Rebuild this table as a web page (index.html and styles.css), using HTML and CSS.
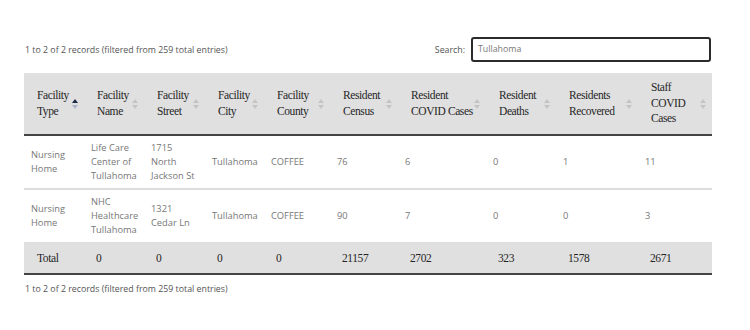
FILE: index.html
```html
<!DOCTYPE html>
<html>
<head>
<meta charset="utf-8">
<link rel="stylesheet" href="styles.css">
</head>
<body>
<div class="wrap">
  <div class="topbar">
    <div class="info">1 to 2 of 2 records (filtered from 259 total entries)</div>
    <label class="search">Search: <span class="input">Tullahoma</span></label>
  </div>
  <table class="grid">
    <colgroup>
      <col class="c1"><col class="c2"><col class="c3"><col class="c4"><col class="c5">
      <col class="c6"><col class="c7"><col class="c8"><col class="c9"><col class="c10">
    </colgroup>
    <thead>
      <tr>
        <th><span class="lbl">Facility<br>Type</span><span class="sort asc"></span></th>
        <th><span class="lbl">Facility<br>Name</span><span class="sort"></span></th>
        <th><span class="lbl">Facility<br>Street</span><span class="sort"></span></th>
        <th><span class="lbl">Facility<br>City</span><span class="sort"></span></th>
        <th><span class="lbl">Facility<br>County</span><span class="sort"></span></th>
        <th><span class="lbl">Resident<br>Census</span><span class="sort"></span></th>
        <th><span class="lbl">Resident<br>COVID Cases</span><span class="sort"></span></th>
        <th><span class="lbl">Resident<br>Deaths</span><span class="sort"></span></th>
        <th><span class="lbl">Residents<br>Recovered</span><span class="sort"></span></th>
        <th><span class="lbl">Staff<br>COVID<br>Cases</span><span class="sort"></span></th>
      </tr>
    </thead>
    <tbody>
      <tr>
        <td>Nursing<br>Home</td>
        <td>Life Care<br>Center of<br>Tullahoma</td>
        <td>1715<br>North<br>Jackson St</td>
        <td>Tullahoma</td>
        <td>COFFEE</td>
        <td>76</td>
        <td>6</td>
        <td>0</td>
        <td>1</td>
        <td>11</td>
      </tr>
      <tr>
        <td>Nursing<br>Home</td>
        <td>NHC<br>Healthcare<br>Tullahoma</td>
        <td>1321<br>Cedar Ln</td>
        <td>Tullahoma</td>
        <td>COFFEE</td>
        <td>90</td>
        <td>7</td>
        <td>0</td>
        <td>0</td>
        <td>3</td>
      </tr>
    </tbody>
    <tfoot>
      <tr>
        <td>Total</td><td>0</td><td>0</td><td>0</td><td>0</td>
        <td>21157</td><td>2702</td><td>323</td><td>1578</td><td>2671</td>
      </tr>
    </tfoot>
  </table>
  <div class="info bottom">1 to 2 of 2 records (filtered from 259 total entries)</div>
</div>
</body>
</html>
```
FILE: styles.css
```css
html, body {
  margin: 0;
  padding: 0;
  background: #fff;
}
.wrap {
  width: 688px;
  margin-left: 24px;
  padding-top: 37px;
  font-family: "Open Sans", "Liberation Sans", sans-serif;
}
.topbar {
  display: flex;
  justify-content: space-between;
  align-items: center;
  height: 25px;
  margin-bottom: 11px;
}
.info {
  font-size: 8.8px;
  color: #555;
  padding-left: 1px;
}
.search {
  display: flex;
  align-items: center;
  font-size: 8.8px;
  color: #555;
}
.input {
  display: block;
  box-sizing: border-box;
  width: 240px;
  height: 25px;
  margin-left: 6px;
  margin-right: 1px;
  border: 2px solid #2b2b2b;
  border-radius: 3px;
  padding: 0 5px;
  line-height: 21px;
  color: #777;
}
.grid {
  width: 688px;
  border-collapse: collapse;
  table-layout: fixed;
}
.c1 { width: 60px; }
.c2 { width: 60px; }
.c3 { width: 61px; }
.c4 { width: 59px; }
.c5 { width: 66px; }
.c6 { width: 68px; }
.c7 { width: 88px; }
.c8 { width: 70px; }
.c9 { width: 82px; }
.c10 { width: 74px; }
thead th {
  background: #e0e0e0;
  border-bottom: 2px solid #444;
  height: 61px;
  padding: 0 4px 0 13px;
  text-align: left;
  font-family: "Liberation Serif", "DejaVu Serif", serif;
  font-weight: normal;
  font-size: 11.5px;
  letter-spacing: -0.4px;
  line-height: 15.5px;
  color: #262626;
  position: relative;
  vertical-align: middle;
}
.lbl {
  display: block;
}
.sort {
  position: absolute;
  right: 6px;
  top: 50%;
  width: 6px;
  height: 11px;
  margin-top: -5px;
}
.sort::before, .sort::after {
  content: "";
  position: absolute;
  left: 0;
  border-left: 3px solid transparent;
  border-right: 3px solid transparent;
}
.sort::before {
  top: 0;
  border-bottom: 4px solid #c4c4c4;
}
.sort::after {
  top: 6px;
  border-top: 4px solid #c4c4c4;
}
.sort.asc::before {
  border-bottom-color: #1c2a44;
}
.sort.asc::after {
  border-top-color: #aab4c8;
}
tbody td {
  padding: 5px 4px 5px 7px;
  font-size: 9.3px;
  line-height: 14px;
  color: #777;
  height: 42px;
  vertical-align: middle;
  border-bottom: 2px solid #ddd;
}
tbody tr:last-child td {
  border-bottom: 1px solid #ddd;
}
tfoot td {
  background: #e0e0e0;
  border-bottom: 2px solid #444;
  height: 30px;
  padding: 0 4px 0 13px;
  font-family: "Liberation Serif", "DejaVu Serif", serif;
  font-size: 11.5px;
  letter-spacing: -0.4px;
  color: #262626;
  vertical-align: middle;
}
tfoot td + td {
  padding-left: 12px;
}
.bottom {
  margin-top: 8px;
}
```
